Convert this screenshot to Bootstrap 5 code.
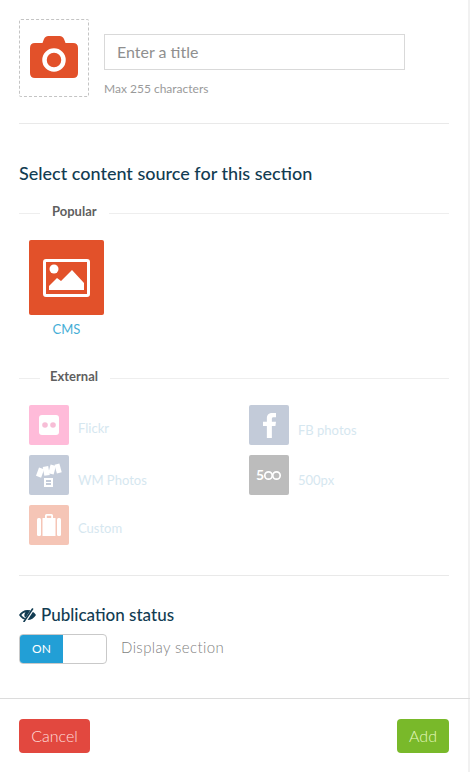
<!DOCTYPE html>
<html lang="en"><head><meta charset="utf-8"><title>Section</title>
<link href="https://cdn.jsdelivr.net/npm/bootstrap@5.3.0/dist/css/bootstrap.min.css" rel="stylesheet">
<style>
html,body{height:100%}
body{font-family:Lato,"Liberation Sans",sans-serif;background:#fff;color:#555;width:470px;height:772px;overflow:hidden}
.shell{width:470px;height:772px;border-right:2px solid #f1f1f1;display:flex;flex-direction:column}
.main-area{padding:19px 19px 0 19px;flex:1 0 auto;height:679px}
.top-row{gap:15px;height:78px}
.drop-box{width:70px;height:78px;border:1px dashed #c4c4c4;border-radius:2px;padding-bottom:2px}
.title-col{padding-top:15px;width:301px}
.title-input{height:36px;border:1px solid #d9d9d9;border-radius:0;font-size:16px;padding:0 12px 2px;color:#555}
.title-input::placeholder{color:#8f8f8f;opacity:1}
.hint-text{font-size:12px;line-height:15px;color:#9a9a9a;margin-top:11px}
.rule-line{height:1px;background:#e9e9e9;margin:0;border:0;opacity:1}
.rule-a{margin-top:26px}
.src-title{font-size:18px;line-height:22px;font-weight:500;color:#123c52;margin:38px 0 0}
.legend-row{height:18px;color:#5f5f5f;font-size:13px;font-weight:700}
.legend-row span{line-height:14px;padding-bottom:4px}
.legend-row::before{content:"";width:21px;height:1px;background:#eee;margin-right:var(--lg-a)}
.legend-row::after{content:"";flex:1;height:1px;background:#eee;margin-left:12px}
.lg-pop{--lg-a:12px;margin-top:20px}
.lg-ext{--lg-a:10px;margin-top:32px}
.big-tile{width:75px;height:75px;background:#e2512a;border-radius:2px;margin:18px 0 0 10px}
.big-name{width:75px;margin-left:10px;text-align:center;color:#45aed6;font-size:13px;line-height:16px;margin-top:6px}
.ext-grid{display:grid;grid-template-columns:220px 200px;grid-auto-rows:40px;row-gap:10px;margin:18px 0 0 10px}
.ext-item{gap:9px;color:#d6e7f0;font-size:13px;line-height:16px}
.ext-name{padding-top:6px}
.ext-name-b{padding-top:10px}
.ext-name-c{padding-top:10px}
.tile-sm{width:40px;height:40px;border-radius:2px;flex:none}
.tile-pink{background:#ffbbd9}.tile-slate{background:#c3cbd9}.tile-grey{background:#bcbcbc}.tile-salmon{background:#f5c5b6}
.rule-b{margin-top:30px}
.pub-title{font-size:17px;line-height:20px;font-weight:500;color:#123c52;margin:29px 0 0;gap:5px}
.toggle-row{margin-top:9px;gap:14px}
.toggle-box{width:88px;height:30px;border:1px solid #c9c9c9;border-radius:4px;overflow:hidden;background:#fff}
.toggle-on{width:43px;background:#229fd6;color:#fff;font-size:12px;line-height:28px;text-align:center}
.toggle-txt{font-size:15px;line-height:26px;font-weight:300;color:#7f7f7f;letter-spacing:.4px}
.foot-bar{border-top:1px solid #dcdcdc;height:74px;padding:20px 21px 0 19px;margin-right:-2px}
.btn-cancel,.btn-add{height:34px;font-size:16px;font-weight:300;line-height:32px;padding:0;border-radius:4px;border:1px solid transparent}
.btn-cancel{width:71px;background:#e2483f;color:#ffdedb}
.btn-add{width:52px;background:#79b92a;color:#e6f8c0}
</style></head>
<body>
<div class="shell">
 <div class="main-area">
  <div class="top-row d-flex">
   <div class="drop-box d-flex align-items-center justify-content-center">
    <svg width="48" height="42" viewBox="0 0 48 42"><path fill="#e2512a" d="M5 7h7.500l1.300-3.500Q15 0 18.500 0h11q3.500 0 4.700 3.500L35.500 7H43q5 0 5 5v25q0 5-5 5H5q-5 0-5-5V12q0-5 5-5z"/><circle cx="24" cy="24" r="9.500" fill="none" stroke="#fff" stroke-width="4.500"/></svg>
   </div>
   <div class="title-col">
    <input class="form-control title-input" type="text" placeholder="Enter a title">
    <div class="hint-text">Max 255 characters</div>
   </div>
  </div>
  <hr class="rule-line rule-a">
  <h2 class="src-title">Select content source for this section</h2>
  <div class="legend-row lg-pop d-flex align-items-center"><span>Popular</span></div>
  <div class="big-tile d-flex align-items-center justify-content-center">
   <svg width="47" height="38" viewBox="0 0 47 38"><rect x="1.500" y="1.500" width="44" height="35" rx="1.500" fill="none" stroke="#fff" stroke-width="3"/><circle cx="11" cy="10" r="4.500" fill="#fff"/><path fill="#fff" d="M6 31v-4l8-8 4 3 11-11 12 13v7z"/></svg>
  </div>
  <div class="big-name">CMS</div>
  <div class="legend-row lg-ext d-flex align-items-center"><span>External</span></div>
  <div class="ext-grid">
   <div class="ext-item d-flex align-items-center">
    <div class="tile-sm tile-pink d-flex align-items-center justify-content-center"><svg width="20" height="20" viewBox="0 0 20 20"><rect width="20" height="20" rx="3" fill="#fff"/><circle cx="6" cy="10" r="2.800" fill="#f7bdd6"/><circle cx="14" cy="10" r="2.800" fill="#f7bdd6"/></svg></div>
    <span class="ext-name">Flickr</span>
   </div>
   <div class="ext-item d-flex align-items-center">
    <div class="tile-sm tile-slate d-flex align-items-center justify-content-center"><svg width="13" height="25" viewBox="0 0 13.500 26"><path fill="#fff" d="M4 26V13.500H0V9h4V5.500C4 1.800 6.300 0 9.500 0h4v4.500H11c-1.300 0-1.800.6-1.800 1.800V9h4.300l-.6 4.500H9.200V26z"/></svg></div>
    <span class="ext-name-b">FB photos</span>
   </div>
   <div class="ext-item d-flex align-items-center">
    <div class="tile-sm tile-slate d-flex align-items-center justify-content-center"><svg width="26" height="28" viewBox="0 0 26 28"><g fill="#fff"><rect x="1.500" y="7" width="5.500" height="9" transform="rotate(20 4 11)"/><rect x="7.500" y="5.500" width="5.500" height="9" transform="rotate(-10 10 10)"/><rect x="13.500" y="4" width="5.500" height="9" transform="rotate(15 16 8)"/><rect x="19.500" y="3" width="5" height="9" transform="rotate(-15 22 7)"/><path fill-rule="evenodd" d="M8 17h9v9H8zm2 2v2h5v-2zm0 3v2h5v-2z"/></g></svg></div>
    <span class="ext-name-c">WM Photos</span>
   </div>
   <div class="ext-item d-flex align-items-center">
    <div class="tile-sm tile-grey d-flex align-items-center justify-content-center"><svg width="26" height="16" viewBox="0 0 26 16"><text x="0" y="13" fill="#fff" font-family="Lato,sans-serif" font-weight="700" font-size="14">5</text><circle cx="12.500" cy="8.500" r="3.700" fill="none" stroke="#fff" stroke-width="1.700"/><circle cx="20.500" cy="8.500" r="3.700" fill="none" stroke="#fff" stroke-width="1.700"/></svg></div>
    <span class="ext-name-c">500px</span>
   </div>
   <div class="ext-item d-flex align-items-center">
    <div class="tile-sm tile-salmon d-flex align-items-center justify-content-center"><svg width="24" height="22" viewBox="0 0 24 22"><path fill="#fff" d="M8 4V1.500Q8 0 9.500 0h5Q16 0 16 1.500V4h-1.800V1.800H9.800V4z"/><rect x="5.500" y="4" width="13" height="18" fill="#fff"/><rect x="0" y="4" width="4" height="18" rx="1.500" fill="#fff"/><rect x="20" y="4" width="4" height="18" rx="1.500" fill="#fff"/></svg></div>
    <span class="ext-name">Custom</span>
   </div>
  </div>
  <hr class="rule-line rule-b">
  <h3 class="pub-title d-flex align-items-center">
   <svg width="17" height="14" viewBox="0 0 17 14"><path fill="#123c52" fill-rule="evenodd" d="M0 7c1.800-3 4.900-5 8.500-5s6.700 2 8.500 5c-1.800 3-4.900 5-8.500 5S1.800 10 0 7zm2.300 0c1.200 1.700 3.200 3 5.200 3.300L5.500 8.500c-.4-1.500 0-3 1-4.300C4.800 4.700 3.300 5.700 2.300 7z"/><path stroke="#fff" stroke-width="3" d="M5.500 14L14 1"/><path stroke="#123c52" stroke-width="1.600" stroke-linecap="round" d="M5 13.500L13.500 1"/></svg>
   <span>Publication status</span>
  </h3>
  <div class="toggle-row d-flex">
   <div class="toggle-box d-flex"><div class="toggle-on">ON</div></div>
   <div class="toggle-txt">Display section</div>
  </div>
 </div>
 <div class="foot-bar d-flex justify-content-between align-items-start">
  <button type="button" class="btn btn-cancel">Cancel</button>
  <button type="button" class="btn btn-add">Add</button>
 </div>
</div>
<script src="https://cdn.jsdelivr.net/npm/bootstrap@5.3.0/dist/js/bootstrap.bundle.min.js"></script>
</body></html>
